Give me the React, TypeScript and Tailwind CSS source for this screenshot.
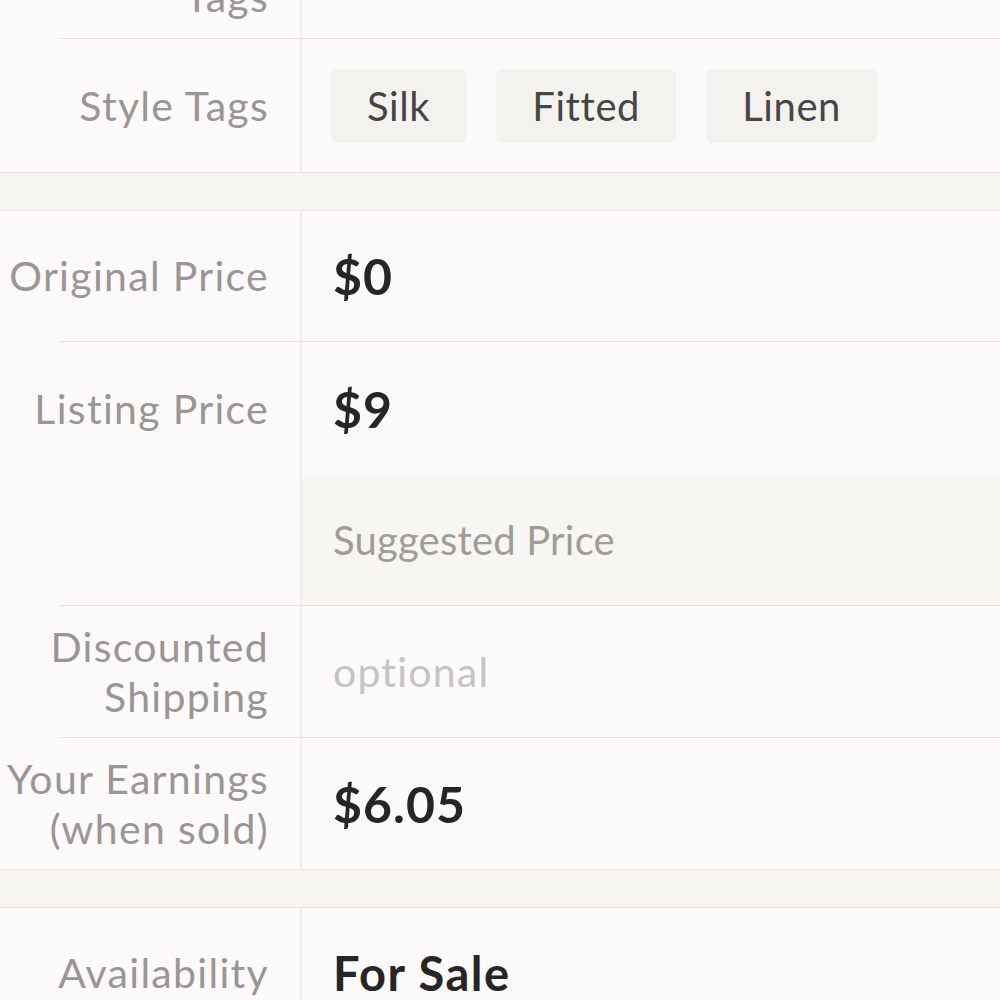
import type { ReactNode } from "react"

// listing editor - price section, scrolled view

const labelCls =
	"w-[302px] shrink-0 border-r-2 border-[#efeded] flex justify-end pr-[31px] text-right text-[41px] tracking-[1.3px] leading-[50px] text-[#9b9693]"

function Sep() {
	return <div className="ml-[60px] h-px bg-[#e6e1e1]" />
}

function Band() {
	return <div className="h-[39px] border-y border-[#e9e5e4] bg-[#f7f6f3]" />
}

function Row({ label, h, children }: { label: ReactNode; h: string; children?: ReactNode }) {
	return (
		<div className={`flex ${h}`}>
			<div className={`${labelCls} items-center`}>
				<div>{label}</div>
			</div>
			<div className="flex-1 flex items-center pl-[31px]">{children}</div>
		</div>
	)
}

function Price({ value }: { value: string }) {
	return <span className="text-[50px] tracking-[1px] font-bold text-[#262626] leading-none">{value}</span>
}

export default function App() {
	const tags = ["Silk", "Fitted", "Linen"]

	return (
		<div className="h-[1000px] overflow-hidden bg-[#fcfafa] font-['Lato','Noto_Sans',sans-serif]">
			{/* обрезанная строка сверху */}
			<div className="flex h-[38px] overflow-hidden">
				<div className={`${labelCls} items-start`}>
					<div className="-mt-[28px]">Tags</div>
				</div>
				<div className="flex-1" />
			</div>
			<Sep />
			<Row label="Style Tags" h="h-[133px]">
				<div className="flex gap-[30px] -ml-[2px]">
					{tags.map((t) => (
						<div
							key={t}
							className="h-[74px] px-[36px] rounded-[7px] bg-[#f4f2ef] flex items-center text-[40px] tracking-[0.6px] text-[#464545]"
						>
							{t}
						</div>
					))}
				</div>
			</Row>
			<Band />
			<Row label="Original Price" h="h-[130px]">
				<Price value="$0" />
			</Row>
			<Sep />
			<div className="flex h-[263px]">
				<div className={`${labelCls} items-start`}>
					<div className="h-[133px] flex items-center">Listing Price</div>
				</div>
				<div className="flex-1 flex flex-col">
					<div className="h-[133px] flex items-center pl-[31px]">
						<Price value="$9" />
					</div>
					<div className="flex-1 bg-[#f7f6f3] flex items-center pl-[31px] text-[40px] tracking-[0.2px] text-[#a09c98]">
						Suggested Price
					</div>
				</div>
			</div>
			<Sep />
			<Row label={<>Discounted<br />Shipping</>} h="h-[131px]">
				<span className="text-[41px] tracking-[1.2px] text-[#c6c3c3]">optional</span>
			</Row>
			<Sep />
			<Row label={<>Your Earnings<br />(when sold)</>} h="h-[131px]">
				<Price value="$6.05" />
			</Row>
			<Band />
			<Row label="Availability" h="h-[130px]">
				<span className="text-[47px] tracking-[1.5px] font-bold text-[#262626] leading-none">For Sale</span>
			</Row>
		</div>
	)
}
